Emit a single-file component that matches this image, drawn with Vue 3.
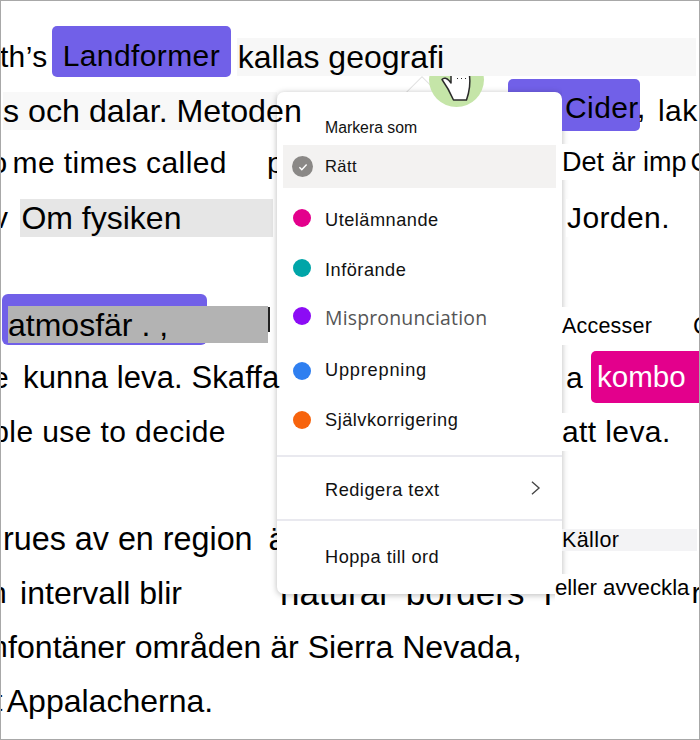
<script setup>
const items = [
  { label: 'Utelämnande', color: '#e3008c', cls: 'i-ute' },
  { label: 'Införande', color: '#00a5a8', cls: 'i-inf' },
  { label: 'Mispronunciation', color: '#8c0cf5', cls: 'i-mis' },
  { label: 'Upprepning', color: '#2f7ff0', cls: 'i-upp' },
  { label: 'Självkorrigering', color: '#f7630c', cls: 'i-sjalv' }
]
</script>

<template>
  <div class="page">
    <div class="doc">
      <div class="row">
        <div class="left">
          <span class="clip-earth">Earth’s</span>
          <span class="pill land">Landformer</span>
          <span class="kallas big">kallas geografi</span>
        </div>
      </div>

      <div class="row second">
        <div class="left">
          <span class="och"><span class="top">s och dalar. Metoden</span></span>
        </div>
        <div class="mid"><span class="pill cider-pill"></span></div>
        <div class="right">
          <span class="cider">Cider,</span><span class="lak">lak</span>
        </div>
      </div>

      <div class="row">
        <div class="left">
          <span class="clip-so">So</span><span class="times">me times called</span><span class="p">p</span>
        </div>
        <div class="mid"></div>
        <div class="right"><span class="patch det">Det är imp</span><span class="c-end">C</span></div>
      </div>

      <div class="row">
        <div class="left">
          <span class="clip-v">v</span>
          <span class="fysik big">Om fysiken</span>
        </div>
        <div class="mid"></div>
        <div class="right"><span class="patch jorden">Jorden.</span></div>
      </div>

      <div class="row"></div>

      <div class="row">
        <div class="left stack">
          <span class="sel big">atmosfär . ,</span><span class="bar-i"></span>
        </div>
        <div class="mid"></div>
        <div class="right"><span class="patch acc">Accesser</span><span class="c2">C</span></div>
      </div>

      <div class="row">
        <div class="left">
          <span class="clip-e">e</span><span class="kunna top">kunna leva. Skaffa</span>
        </div>
        <div class="mid"></div>
        <div class="right"><span class="a-word">a</span><span class="pill kombo">kombo</span></div>
      </div>

      <div class="row">
        <div class="left">
          <span class="clip-pe">peop</span><span class="use">le use to decide</span>
        </div>
        <div class="mid"></div>
        <div class="right"><span class="patch leva">att leva.</span></div>
      </div>

      <div class="row"></div>

      <div class="row">
        <div class="left">
          <span class="rues big">rues av en region</span><span class="ae big">ä</span>
        </div>
        <div class="mid"></div>
        <div class="right"><span class="kallor">Källor</span></div>
      </div>

      <div class="row">
        <div class="left">
          <span class="clip-n">n</span><span class="intervall big">intervall blir</span>
        </div>
        <div class="mid"><span class="natural">natural borders f</span></div>
        <div class="right"><span class="patch eller">eller avveckla</span><span class="r-end">r</span></div>
      </div>

      <div class="row">
        <div class="left"><span class="clip-n2">n</span><span class="font big">fontäner områden är Sierra Nevada,</span></div>
      </div>

      <div class="row">
        <div class="left"><span class="clip-t">t</span><span class="app big">Appalacherna.</span></div>
      </div>
    </div>

    <div class="tip"></div>
    <div class="menu">
      <div class="head">Markera som</div>
      <div class="item active">
        <span class="dot check">
          <svg viewBox="0 0 20 20" width="12" height="12" aria-hidden="true">
            <path d="M4 10.5l4 4 8-8.5" fill="none" stroke="#fff" stroke-width="2.4" />
          </svg>
        </span>
        <span class="label ratt">Rätt</span>
      </div>
      <div v-for="it in items" :key="it.label" class="item" :class="it.cls">
        <span class="dot" :style="{ background: it.color }"></span>
        <span class="label">{{ it.label }}</span>
      </div>
      <div class="item redigera">
        <span class="label plain">Redigera text</span>
        <svg class="chev" viewBox="0 0 12 18" width="11" height="16" aria-hidden="true">
          <path d="M2 2l8 7-8 7" fill="none" stroke="#444" stroke-width="1.5" />
        </svg>
      </div>
      <div class="item hoppa">
        <span class="label">Hoppa till ord</span>
      </div>
    </div>

    <div class="touch"></div>
    <svg class="hand" viewBox="0 0 34 30" width="34" height="30" aria-hidden="true">
      <path d="M2 5.500C4 3 7 4.500 9 6.500L11 9V1H29.500C30.500 9 30 16 26.500 26H13.500C10 18 6 11 2 5.500Z" fill="#fff" stroke="#2b2b2b" stroke-width="1.500" stroke-linejoin="round" />
      <path d="M17 4.500h1M21 4.500h1M25 4.500h1" stroke="#2b2b2b" stroke-width="1.200" />
    </svg>
  </div>
</template>

<style>
html, body { margin: 0; background: #fff; }
</style>

<style scoped>
.page {
  position: relative;
  width: 700px;
  height: 740px;
  box-sizing: border-box;
  border: 1px solid #a8a8a8;
  overflow: hidden;
  background: #fff;
  font-family: "Liberation Sans", Arial, sans-serif;
  color: #000;
}
.doc {
  padding-top: 37px;
  font-size: 30px;
  line-height: 38px;
  white-space: nowrap;
  letter-spacing: 0.4px;
}
.row {
  display: grid;
  grid-template-columns: 276px 285px 137px;
  height: 53.8px;
  align-items: start;
}
.second { height: 52px; }
.left, .right, .mid { display: flex; align-items: flex-start; min-width: 0; }
.left > *, .right > *, .mid > * { flex: none; }
.big { font-size: 32px; letter-spacing: 0; }

.pill { background: #7160e8; border-radius: 5px; display: block; }

.clip-earth { margin-left: -49px; }
.land {
  margin: -12px 0 0 4px;
  width: 179px;
  height: 51px;
  line-height: 60px;
  padding-left: 11px;
  box-sizing: border-box;
}
.kallas {
  position: relative;
  z-index: 3;
  margin-left: 6px;
  width: 459px;
  background: #f7f7f7;
  padding-left: 1px;
  box-sizing: border-box;
}

.och { background: #f8f8f8; width: 274px; margin-left: 2px; font-size: 32.200px; letter-spacing: 0; }
.top { position: relative; z-index: 3; }
.cider-pill { margin: -13px 0 0 231px; width: 54px; height: 52px; border-radius: 5px 0 0 5px; }
.cider {
  background: #7160e8;
  width: 78px;
  height: 52px;
  margin-top: -13px;
  line-height: 58px;
  padding-left: 3px;
  box-sizing: border-box;
  border-radius: 0 5px 5px 0;
  position: relative;
  z-index: 2;
}
.lak { margin-left: 18px; }

.clip-so { margin-left: -31px; }
.times { margin-left: 5px; }
.p { margin-left: 40px; }
.patch { background: #fff; position: relative; z-index: 2; }
.det { font-size: 27px; letter-spacing: 0; line-height: 36px; padding-right: 4px; }
.c-end { font-size: 26.700px; line-height: 36px; }

.clip-v { margin-left: -8px; margin-top: 1px; }
.fysik { background: #e6e6e6; margin: 1px 0 0 12px; width: 253px; padding-left: 1px; box-sizing: border-box; }
.jorden { margin: 1px 0 0 4px; padding-left: 1px; }

.stack { position: relative; z-index: 0; }
.sel {
  position: relative;
  margin: 1px 0 0 7px;
  width: 260px;
  height: 37px;
  background: #b3b3b3;
}
.sel::before {
  content: "";
  position: absolute;
  left: -6px;
  top: -12px;
  width: 205px;
  height: 51px;
  background: #7160e8;
  border-radius: 6px;
  z-index: -1;
}
.bar-i { width: 2px; height: 25px; background: #222; margin: 2px 0 0 0; }
.acc { font-size: 21.500px; line-height: 38px; margin-top: 2px; padding-right: 2px; letter-spacing: 0.2px; }
.c2 { font-size: 24px; margin: 2px 0 0 39px; }

.clip-e { margin-left: -9px; }
.kunna { margin-left: 14px; font-size: 31px; letter-spacing: 0.1px; }
.a-word { margin-left: 4px; }
.kombo {
  background: #e3008c;
  color: #fff;
  margin: -8px 0 0 8px;
  width: 110px;
  height: 52px;
  line-height: 52px;
  padding-left: 6px;
  box-sizing: border-box;
  border-radius: 5px 0 0 5px;
  font-size: 29.500px;
  letter-spacing: 0;
}

.clip-pe { margin-left: -60px; }
.leva { padding-right: 1px; }

.rues { margin-left: 2px; font-size: 32.300px; }
.ae { margin-left: 16px; }
.kallor {
  font-size: 21.500px;
  line-height: 22px;
  height: 22px;
  width: 135px;
  background: #f3f3f5;
  margin-top: 9px;
  position: relative;
  z-index: 2;
}

.clip-n { margin-left: -11px; }
.intervall { margin-left: 13px; }
.natural { margin-left: 3px; width: 272px; overflow: hidden; font-size: 35px; word-spacing: 9px; letter-spacing: 0; }
.eller {
  margin-left: -7px;
  font-size: 22.200px;
  line-height: 28px;
  letter-spacing: 0;
}
.r-end { margin-left: 2px; }

.clip-n2 { margin-left: -10px; }
.font { margin-left: 0; font-size: 32.100px; }
.clip-t { margin-left: -7px; }
.app { margin-left: 4px; }

.tip {
  position: absolute;
  left: 409px;
  top: 80px;
  width: 22px;
  height: 22px;
  background: #fff;
  border: 1px solid #e2e2e2;
  transform: rotate(45deg);
  z-index: 1;
}
.menu {
  position: absolute;
  left: 276px;
  top: 91px;
  width: 285px;
  height: 502px;
  box-sizing: border-box;
  padding: 0 6px;
  background: #fff;
  border-radius: 7px;
  box-shadow: 0 1px 6px rgba(0, 0, 0, 0.28);
  z-index: 1;
  display: flex;
  flex-direction: column;
}
.head {
  height: 53px;
  line-height: 71px;
  padding-left: 42px;
  font-size: 15.800px;
  color: #111;
}
.item {
  display: flex;
  align-items: center;
  height: 50px;
  flex: none;
  color: #111;
}
.dot {
  width: 18px;
  height: 18px;
  border-radius: 50%;
  margin: 0 14px 0 10px;
  flex: none;
  display: flex;
  align-items: center;
  justify-content: center;
}
.label { letter-spacing: 0.5px; font-size: 18.200px; }
.plain { margin-top: 4px; }
.ratt { font-size: 16.500px; letter-spacing: 0.4px; }
.active {
  height: 43px;
  margin-bottom: 5px;
  background: #f3f2f1;
}
.check { background: #8a8886; width: 21px; height: 21px; margin: 0 12px 0 9px; }
.i-ute .label, .i-inf .label { margin-top: 4px; }
.i-mis { height: 46px; }
.i-mis .label {
  font-family: "Open Sans", sans-serif;
  color: #555;
  font-size: 19.400px;
  letter-spacing: 0.2px;
  margin-top: 2px;
}
.i-upp { margin-top: 7px; height: 49px; }
.i-upp .label { letter-spacing: 0.8px; }
.i-sjalv .label { margin-top: 1px; }
.redigera {
  margin: 10px -6px 0;
  height: 66px;
  padding-left: 48px;
  padding-right: 21px;
  justify-content: space-between;
  border-top: 2px solid #e9e9ef;
  border-bottom: 2px solid #e9e9ef;
  box-sizing: border-box;
}
.hoppa { height: 72px; padding-left: 42px; align-items: flex-start; padding-top: 26px; box-sizing: border-box; }

.touch {
  position: absolute;
  left: 428px;
  top: 51px;
  width: 55px;
  height: 55px;
  border-radius: 50%;
  background: #c5e5a8;
  z-index: 1;
}
.hand {
  position: absolute;
  left: 439px;
  top: 73px;
  z-index: 1;
}
</style>
